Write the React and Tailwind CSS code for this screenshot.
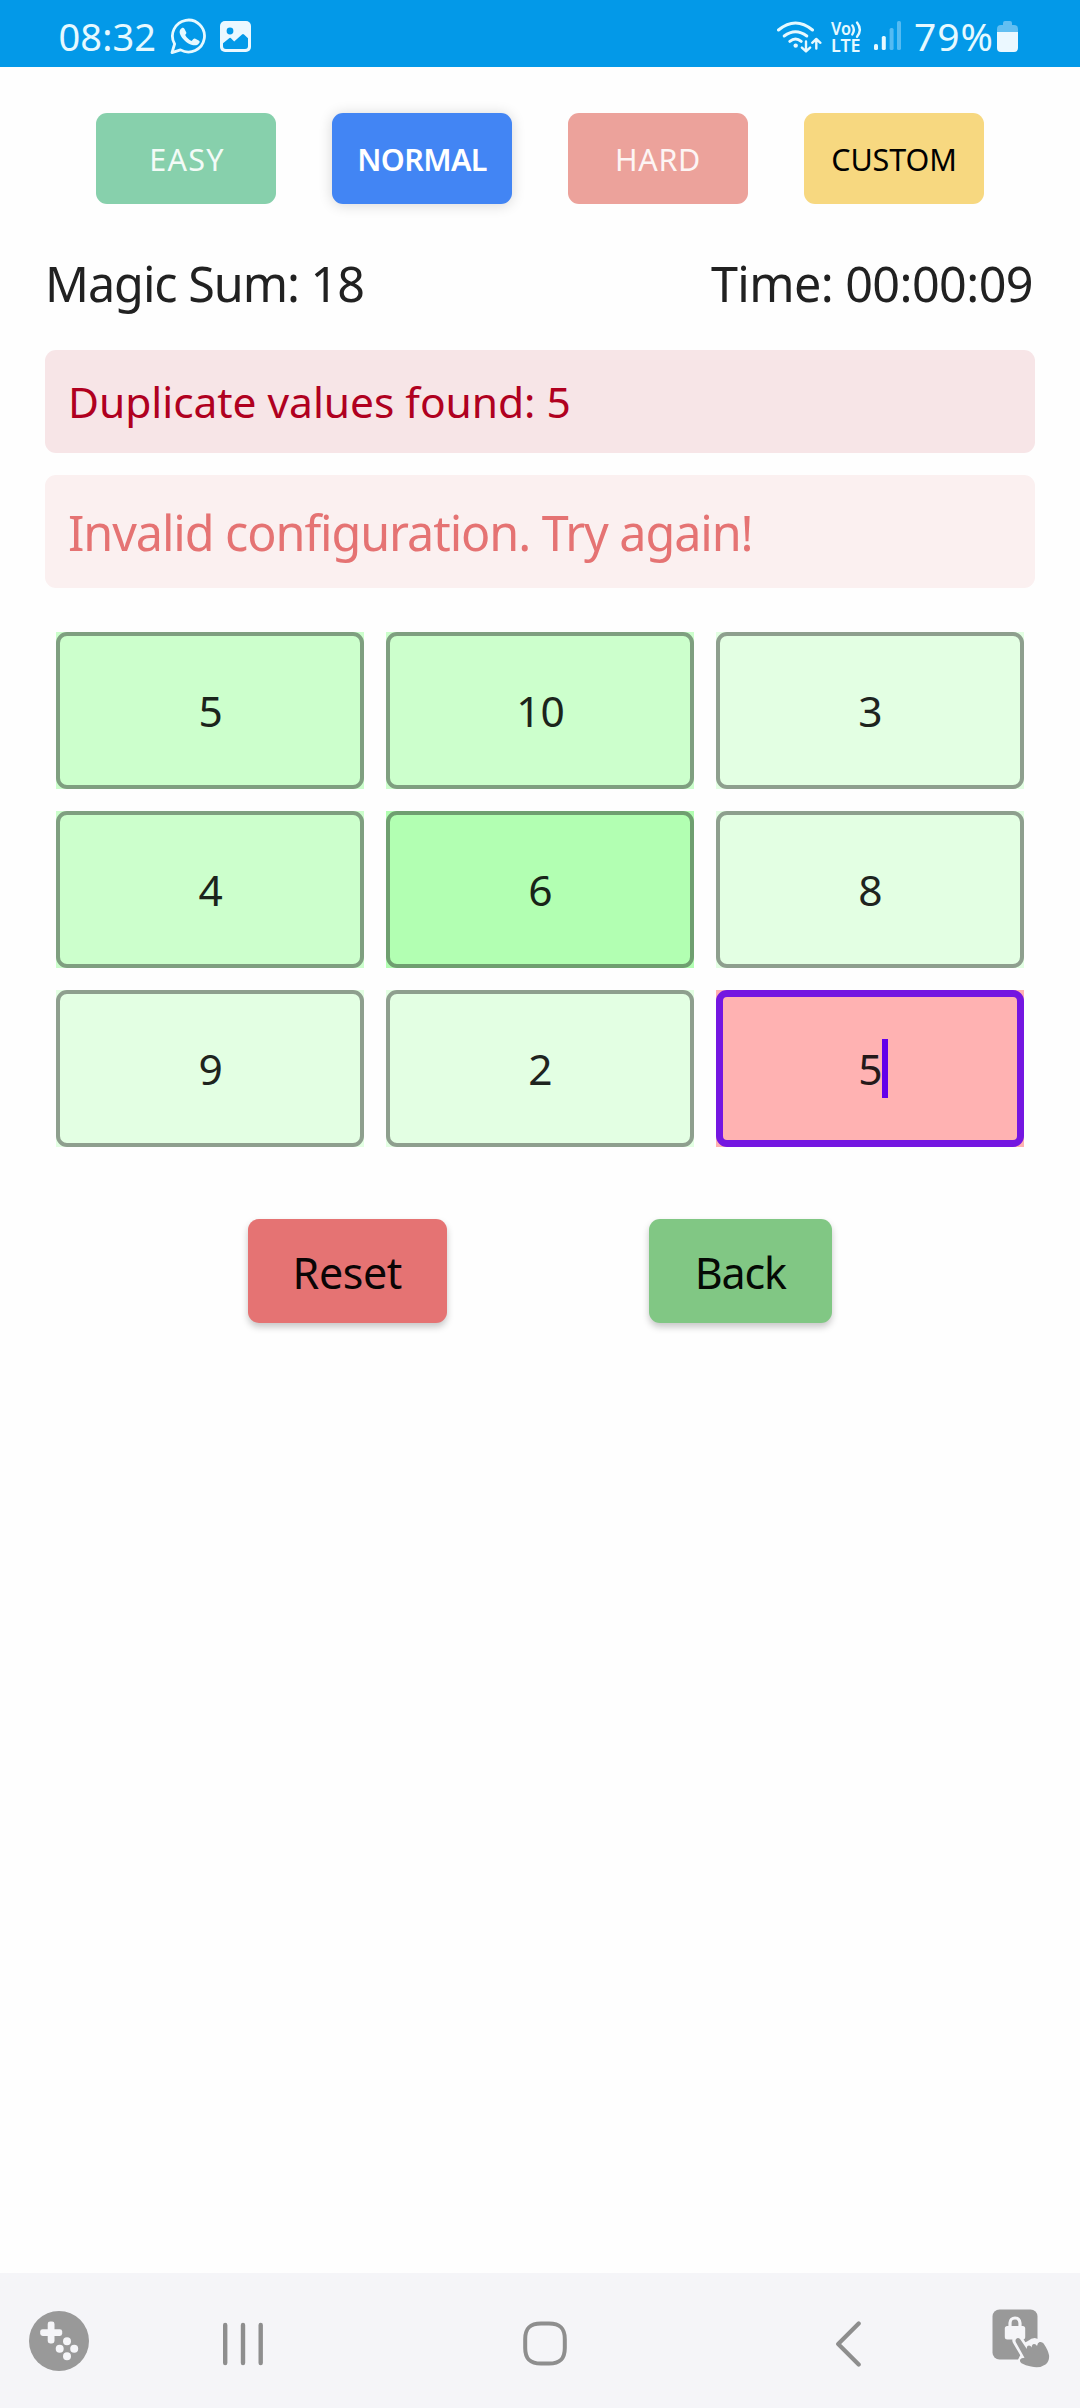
import React from "react";

const levels = [
  { label: "EASY", cls: "bg-[#87d0ac] text-[#f3fbf7] tracking-[1.2px] pl-[2px]" },
  {
    label: "NORMAL",
    cls: "bg-[#4285f4] text-white font-semibold tracking-[-0.6px] shadow-[0_1px_14px_rgba(0,0,0,0.16)]",
  },
  { label: "HARD", cls: "bg-[#eca29b] text-[#fdf5f4] tracking-[0.7px]" },
  { label: "CUSTOM", cls: "bg-[#f7d880] text-black tracking-[-0.1px]" },
];

const cells = [
  { value: "5", cls: "bg-[#ccffcc] text-[#1b241b]", edge: "border-4 border-[#7f9f80]" },
  { value: "10", cls: "bg-[#ccffcc] text-[#1b241b]", edge: "border-4 border-[#7f9f80]" },
  { value: "3", cls: "bg-[#e3ffe3] text-[#1e241e]", edge: "border-4 border-[#8e9f8e]" },
  { value: "4", cls: "bg-[#ccffcc] text-[#1b241b]", edge: "border-4 border-[#7f9f80]" },
  { value: "6", cls: "bg-[#b2ffb2] text-[#182418]", edge: "border-4 border-[#6f9f70]" },
  { value: "8", cls: "bg-[#e3ffe3] text-[#1e241e]", edge: "border-4 border-[#8e9f8e]" },
  { value: "9", cls: "bg-[#e3ffe3] text-[#1e241e]", edge: "border-4 border-[#8e9f8e]" },
  { value: "2", cls: "bg-[#e3ffe3] text-[#1e241e]", edge: "border-4 border-[#8e9f8e]" },
  { value: "5", cls: "bg-[#ffb2b2] text-[#241919]", edge: "border-[7px] border-[#7416e1]", focused: true },
];

function WhatsAppIcon() {
  return (
    <svg className="h-[37px] w-[37px]" viewBox="0 0 37 37" fill="none">
      <path
        d="M4.6 26A16 16 0 1 1 10.5 31.9L2 34.6Z"
        stroke="#e6f9ff"
        strokeWidth="2.8"
        strokeLinejoin="round"
      />
      <path
        d="M11.6 10.2c1-.8 2.2-.6 2.8.5l1.8 3.6c.4.8.1 1.400-1 2.700 1.400 2.800 3.800 4.800 6.400 5.900l1.800-1.900c.6-.6 1.200-.7 2-.3l3.300 1.700c1 .5 1.200 1.200.8 2.100-1.300 2.700-4.200 3.400-7.400 2.400-5.800-1.700-10.200-6.100-12.100-10.900-.9-2.400-.2-4.700 1.600-5.800z"
        fill="#e6f9ff"
      />
    </svg>
  );
}

function PictureIcon() {
  return (
    <svg className="h-[31px] w-[31px]" viewBox="0 0 31 31">
      <rect width="31" height="31" rx="5" fill="#ebf8ff" />
      <circle cx="10" cy="10" r="3.4" fill="#0399e8" />
      <path
        d="M3 22.2L9.5 17.1Q10.3 16.6 11 17.2L14.2 20.6L22 13.4Q23 12.6 24 13.4L28 17.2V25Q28 28 25 28H6Q3 28 3 25Z"
        fill="#0399e8"
      />
    </svg>
  );
}

function WifiIcon() {
  return (
    <svg className="h-[36px] w-[46px]" viewBox="0 0 46 36" fill="none" stroke="#e6f9ff" strokeLinecap="round">
      <path d="M2.5 11Q19.5-3 36.5 11" strokeWidth="3" />
      <path d="M8.2 17Q19.5 8.5 30.8 17" strokeWidth="3" />
      <path d="M13.8 22.3Q19.5 17.6 25.2 22.3" strokeWidth="3" />
      <circle cx="19.7" cy="26.6" r="2.2" fill="#e6f9ff" stroke="none" />
      <path d="M30 22.5V32M25.9 28.6L30 32.4L34.1 28.6M40.3 29.6V20.3M36.2 23.8L40.3 20L44.4 23.8" strokeWidth="2.4" strokeLinejoin="round" />
    </svg>
  );
}

function VolteIcon() {
  return (
    <svg className="h-[36px] w-[34px] overflow-visible" viewBox="0 0 34 36" fill="#e6f9ff">
      <text x="1" y="16" fontFamily="Noto Sans, sans-serif" fontWeight="600" fontSize="17" textLength="20" lengthAdjust="spacingAndGlyphs">
        Vo
      </text>
      <path d="M22.3 6.4Q25.4 10.8 22.3 15.4M27 3.6Q32.6 10.8 27 17.8" fill="none" stroke="#e6f9ff" strokeWidth="2.4" strokeLinecap="round" />
      <text x="1" y="33" fontFamily="Noto Sans, sans-serif" fontWeight="600" fontSize="17" textLength="29.5" lengthAdjust="spacingAndGlyphs">
        LTE
      </text>
    </svg>
  );
}

function SignalIcon() {
  return (
    <svg className="h-[30px] w-[28px]" viewBox="0 0 28 30">
      <rect x="0" y="23" width="4" height="6" rx="1.6" fill="#e6f9ff" />
      <rect x="7.8" y="15" width="4" height="14" rx="1.6" fill="#e6f9ff" />
      <rect x="15.6" y="7" width="4" height="22" rx="1.6" fill="#55bbf2" />
      <rect x="23" y="0" width="4" height="29" rx="1.6" fill="#55bbf2" />
    </svg>
  );
}

function BatteryIcon() {
  return (
    <svg className="h-[31px] w-[21px]" viewBox="0 0 21 31">
      <path d="M6 2Q6 0 8 0H13Q15 0 15 2V4H17Q21 4 21 8V12H0V8Q0 4 4 4H6Z" fill="#62bff2" />
      <path d="M0 11H21V27Q21 31 17 31H4Q0 31 0 27Z" fill="#ebf8ff" />
    </svg>
  );
}

function StatusBar() {
  return (
    <header className="flex h-[66.5px] items-center bg-[#0399e8] pt-[7px] text-[#e6f9ff]">
      <span className="-mt-[2px] ml-[58.5px] w-[111.5px] text-[38px] leading-none tracking-[0.1px]">08:32</span>
      <WhatsAppIcon />
      <span className="ml-[13px] flex">
        <PictureIcon />
      </span>
      <span className="ml-[525px] flex">
        <WifiIcon />
      </span>
      <span className="ml-[8px] flex">
        <VolteIcon />
      </span>
      <span className="-mt-[1px] ml-[10px] flex">
        <SignalIcon />
      </span>
      <span className="-mt-[2px] ml-[12px] w-[83px] text-[39px] leading-none tracking-[0.9px] whitespace-nowrap">79%</span>
      <BatteryIcon />
    </header>
  );
}

function Cell({ value, cls, edge, focused }) {
  return (
    <div className={"flex h-[157px] " + cls}>
      <div className={"flex flex-1 items-center justify-center rounded-[11px] text-[42.5px] leading-none " + edge}>
        <span className="relative pt-[2px] pl-px">
          {value}
          {focused && <span className="absolute top-1/2 left-full h-[59px] w-[6px] -translate-y-[30px] bg-[#6200ea]" />}
        </span>
      </div>
    </div>
  );
}

function GamepadIcon() {
  return (
    <svg className="h-[60px] w-[60px]" viewBox="0 0 60 60">
      <circle cx="30" cy="30" r="30" fill="#999" />
      <g fill="#f5f5f8">
        <rect x="18.7" y="10.5" width="6.8" height="22" rx="2.4" />
        <rect x="11.2" y="18.2" width="22" height="6.8" rx="2.4" />
        <circle cx="38" cy="30.3" r="4" />
        <circle cx="30.7" cy="37.7" r="4" />
        <circle cx="45.2" cy="37.7" r="4" />
        <circle cx="38" cy="45.2" r="4" />
      </g>
    </svg>
  );
}

function TouchLockIcon() {
  return (
    <svg className="h-[60px] w-[58px]" viewBox="0 0 58 60">
      <rect x="0.5" y="0.5" width="45" height="50" rx="7" fill="#999" />
      <path d="M18 18V14a5 5 0 0 1 10 0V18" fill="none" stroke="#f5f5f8" strokeWidth="3.2" />
      <rect x="12.8" y="17" width="20.4" height="13.5" rx="2.5" fill="#f5f5f8" />
      <path
        d="M25.8 31.2L34.5 46L31 53M36 40L35.5 38.2Q38 37.5 40 36Q43 33 46.5 36.5L50 34.5Q53.5 35.5 55 41Q58 50 50 55.5Q43 59 31 53"
        fill="none"
        stroke="#f5f5f8"
        strokeWidth="11"
        strokeLinejoin="round"
        strokeLinecap="round"
      />
      <path
        d="M24 33.5Q22.6 30.5 25 29.3Q27.2 28.4 28.6 30.8L34.8 40Q34.6 36.6 37 36.6Q38.8 36.6 39.6 38.5Q39.8 35 42 34.9Q44 34.8 45 37Q45.6 33.7 47.6 33Q50.2 32.5 51.6 34.5Q56 41 57 46Q57.8 52 53.5 55.6Q47.5 59.8 39 57.6Q33.5 56.3 29.5 54.2Q27.4 52.8 28.2 50.6Q29 48.8 32.5 48.8Z"
        fill="#999"
      />
    </svg>
  );
}

function NavBar() {
  return (
    <nav className="flex h-[135px] items-center bg-[#f5f5f8]">
      <span className="ml-[29px] flex">
        <GamepadIcon />
      </span>
      <svg className="mt-[6px] ml-[131px] h-[44px] w-[46px]" viewBox="0 0 46 44" fill="#8e8e8e">
        <rect x="3" y="0.8" width="4.4" height="42.4" rx="2.2" />
        <rect x="20.8" y="0.8" width="4.4" height="42.4" rx="2.2" />
        <rect x="38.5" y="0.8" width="4.4" height="42.4" rx="2.2" />
      </svg>
      <svg className="mt-[6px] ml-[257px] h-[45px] w-[44px]" viewBox="0 0 44 45" fill="none">
        <path
          d="M18 2.4H26C37 2.4 41.8 7 41.8 18V27C41.8 38 37 42.6 26 42.6H18C7 42.6 2.2 38 2.2 27V18C2.2 7 7 2.4 18 2.4Z"
          stroke="#8e8e8e"
          strokeWidth="4"
        />
      </svg>
      <svg className="mt-[6px] ml-[267px] h-[46px] w-[29px]" viewBox="0 0 29 46" fill="none">
        <path d="M24.7 2.5L4.2 23L24.7 43.5" stroke="#8e8e8e" strokeWidth="4.2" strokeLinecap="round" strokeLinejoin="round" />
      </svg>
      <span className="-mt-[3px] ml-[129px] flex">
        <TouchLockIcon />
      </span>
    </nav>
  );
}

export default function App() {
  return (
    <div className="flex h-[2408px] w-[1080px] flex-col overflow-hidden bg-[#fefefe] font-['Noto_Sans',sans-serif]">
      <StatusBar />
      <main className="flex flex-1 flex-col px-[45px]">
        <div className="mt-[46.5px] flex justify-center gap-14">
          {levels.map((l) => (
            <button
              key={l.label}
              className={"h-[90.5px] w-[180px] rounded-[11px] pt-[2px] text-[30.5px] leading-none " + l.cls}
            >
              {l.label}
            </button>
          ))}
        </div>
        <div className="mt-[45.5px] flex h-[67px] items-center justify-between pt-[2px] text-[48.5px] leading-none whitespace-nowrap text-[#212121]">
          <span className="tracking-[-1.05px]">Magic Sum: 18</span>
          <span className="pr-[2px] tracking-[-0.58px]">Time: 00:00:09</span>
        </div>
        <div className="mt-[33.5px] flex h-[103.5px] items-center rounded-[11px] bg-[#f7e5e7] px-[23px] pt-[2px] text-[42.5px] leading-none tracking-[-0.04px] text-[#b00020]">
          Duplicate values found: 5
        </div>
        <div className="mt-[21.5px] flex h-[113px] items-center rounded-[11px] bg-[#fbf0f0] px-[23px] pt-[2px] text-[48.5px] leading-none tracking-[-1.08px] text-[#e57373]">
          Invalid configuration. Try again!
        </div>
        <div className="mt-[44.5px] grid grid-cols-3 gap-x-[21.5px] gap-y-[22px] px-[11px]">
          {cells.map((c, i) => (
            <Cell key={i} {...c} />
          ))}
        </div>
        <div className="mt-[72px] flex">
          <button className="ml-[203px] h-[104px] w-[198.5px] rounded-[11px] bg-[#e57373] pt-[2px] text-[43px] leading-none tracking-[-0.4px] text-[#0a0505] shadow-[0_4px_7px_rgba(0,0,0,0.22)]">
            Reset
          </button>
          <button className="ml-[202.5px] h-[104px] w-[182.5px] rounded-[11px] bg-[#81c784] pt-[2px] text-[43px] leading-none tracking-[-1.2px] text-[#050a05] shadow-[0_4px_7px_rgba(0,0,0,0.22)]">
            Back
          </button>
        </div>
      </main>
      <NavBar />
    </div>
  );
}
